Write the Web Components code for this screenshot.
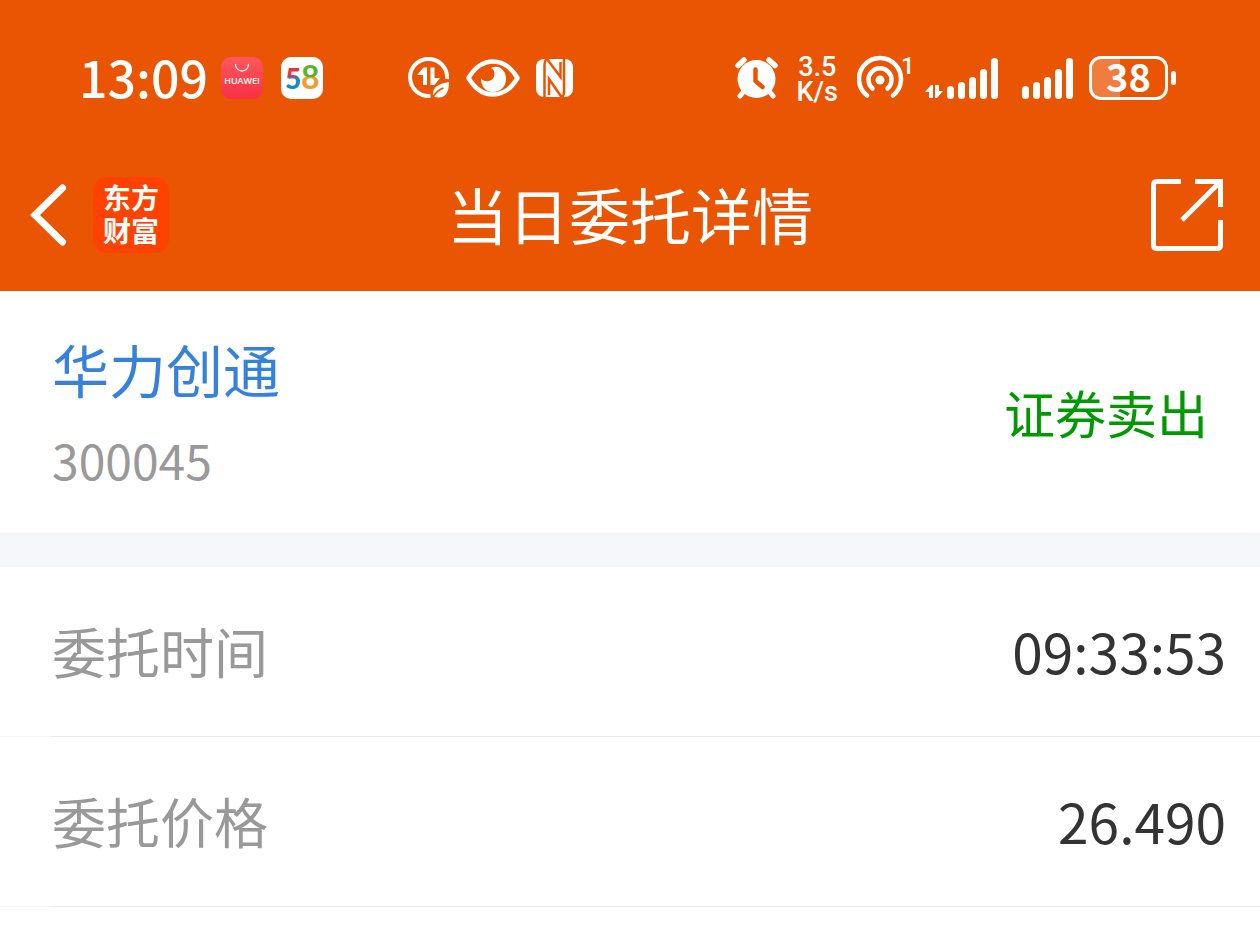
<!DOCTYPE html>
<html lang="zh-CN">
<head>
<meta charset="utf-8">
<meta name="viewport" content="width=device-width, initial-scale=1">
<title>当日委托详情</title>
<style>
  body {
    margin: 0;
    background-color: #fff;
    font-family: "Noto Sans CJK SC", "Noto Sans", sans-serif;
  }
</style>
</head>
<body>
<order-page>
  <status-bar slot="top" time="13:09" battery="38"></status-bar>
  <nav-bar slot="top">当日委托详情</nav-bar>
  <stock-card>
    <span slot="name">华力创通</span>
    <span slot="code">300045</span>
    <span slot="side">证券卖出</span>
  </stock-card>
  <detail-row label="委托时间">09:33:53</detail-row>
  <detail-row label="委托价格">26.490</detail-row>
</order-page>

<script>
const define = (name, getTemplate) => {
  customElements.define(name, class extends HTMLElement {
    constructor() {
      super();
      this._shadowRoot = this.attachShadow({ mode: "open" });
    }

    connectedCallback() {
      const template = document.createElement("template");
      template.innerHTML = getTemplate(this);
      this._shadowRoot.replaceChildren(template.content.cloneNode(true));
    }
  });
};

define("order-page", () => `
  <style>
    :host {
      display: block;
    }
    header {
      background-color: #ea5504;
      color: #fff;
    }
  </style>
  <header><slot name="top"></slot></header>
  <main><slot></slot></main>
`);

define("app-badge", (el) => `
  <style>
    :host {
      display: block;
    }
    svg {
      display: block;
    }
    .huawei {
      font: 600 9px "Open Sans", sans-serif;
    }
    .five {
      font: 900 28px Lato, sans-serif;
    }
    .eight {
      font: 700 32px Lato, sans-serif;
    }
  </style>
  ${el.getAttribute("app") === "huawei" ? `
  <svg width="42" height="42" viewBox="0 0 42 42" role="img" aria-label="HUAWEI">
    <defs>
      <linearGradient id="red" x2="0" y2="1">
        <stop offset="0" stop-color="#ff575c"/>
        <stop offset="1" stop-color="#f93043"/>
      </linearGradient>
    </defs>
    <rect width="42" height="42" rx="10" fill="url(#red)"/>
    <path d="M14.500 7.500a6.500 6.500 0 0 0 13 0" fill="none" stroke="#fff" stroke-width="1.300" stroke-linecap="round"/>
    <text class="huawei" x="21" y="27" fill="#fff" text-anchor="middle">HUAWEI</text>
  </svg>` : `
  <svg width="42" height="42" viewBox="0 0 42 42" role="img" aria-label="58">
    <defs>
      <linearGradient id="five" x2="0" y2="1">
        <stop offset=".47" stop-color="#e5323e"/>
        <stop offset=".47" stop-color="#1687c9"/>
      </linearGradient>
      <linearGradient id="eight" x2="0" y2="1">
        <stop offset=".52" stop-color="#54b52b"/>
        <stop offset=".52" stop-color="#f29a2e"/>
      </linearGradient>
    </defs>
    <rect width="42" height="42" rx="10" fill="#fff"/>
    <text class="five" x="4" y="32" fill="url(#five)">5</text>
    <text class="eight" x="20" y="32" fill="url(#eight)">8</text>
  </svg>`}
`);

define("signal-bars", () => `
  <style>
    :host {
      display: block;
    }
    svg {
      display: block;
    }
  </style>
  <svg width="51" height="42" viewBox="0 -1 51 42" fill="#fff" aria-hidden="true">
    <rect y="28" width="7" height="13" rx="3.500"/>
    <rect x="11" y="24" width="7" height="17" rx="3.500"/>
    <rect x="22" y="19" width="7" height="22" rx="3.500"/>
    <rect x="33" y="11" width="7" height="30" rx="3.500"/>
    <rect x="44" y="0" width="7" height="41" rx="3.500"/>
  </svg>
`);

define("battery-level", (el) => `
  <style>
    :host {
      display: flex;
      align-items: center;
      gap: 3px;
    }
    .cell {
      box-sizing: border-box;
      width: 79px;
      height: 44px;
      border: 3px solid #fff;
      border-radius: 12px;
      background: linear-gradient(to right, #f07c3e ${el.getAttribute("value")}%, transparent 0) no-repeat;
      font-size: 38px;
      font-weight: 700;
      line-height: 34px;
      text-align: center;
    }
    .tip {
      width: 5px;
      height: 14px;
      border-radius: 3px;
      background-color: #fff;
    }
  </style>
  <div class="cell">${el.getAttribute("value")}</div>
  <div class="tip"></div>
`);

define("status-bar", (el) => `
  <style>
    :host {
      display: flex;
      align-items: center;
      height: 122px;
      padding: 17px 84px 0 79px;
    }
    svg {
      display: block;
    }
    .group {
      display: flex;
      align-items: center;
      gap: 16px;
    }
    .left {
      gap: 13px;
    }
    .left app-badge + app-badge {
      margin-left: 5px;
    }
    .time {
      padding-bottom: 4px;
      font-size: 50px;
      font-weight: 500;
      line-height: 50px;
    }
    .middle {
      margin-left: 85px;
    }
    .right {
      margin-left: auto;
    }
    .speed {
      padding: 4px 3px 0;
      font: 500 27px/25px Roboto, sans-serif;
      text-align: center;
    }
    .network {
      display: flex;
      align-items: flex-end;
      gap: 4px;
      margin-left: -8px;
    }
    .second {
      margin-left: 8px;
    }
    .count {
      font: 500 24px Roboto, sans-serif;
    }
  </style>
  <div class="group left">
    <span class="time">${el.getAttribute("time")}</span>
    <app-badge app="huawei"></app-badge>
    <app-badge app="58"></app-badge>
  </div>
  <div class="group middle">
    <svg width="42" height="42" viewBox="0 0 42 42" fill="none" aria-hidden="true">
      <path d="M22.500 38.800A18.500 18.500 0 1 1 39 22" stroke="#fff" stroke-width="4"/>
      <path d="M9 18L15.500 10.500H19V28H15V18ZM22.500 10.500H26.500V21H32L26.500 28H22.500Z" fill="#fff"/>
      <path d="M41 25C30 27 24 30 25 39.500C36 43 41 37 41 25Z" fill="#fff"/>
      <path d="M24 41.500C27 36 31 32.500 35.500 31" stroke="#ea5504" stroke-width="1.800"/>
    </svg>
    <svg width="54" height="38" viewBox="0 0 54 38" aria-hidden="true">
      <path d="M2.500 19C9 8 18 2.500 27 2.500S45 8 51.500 19C45 30 36 35.500 27 35.500S9 30 2.500 19Z" fill="none" stroke="#fff" stroke-width="4.500" stroke-linejoin="round"/>
      <path d="M25 9C34 5 40 12 40 20C40 28 34 33 27 33C19 33 15 27 15 19.500C18 23 24 23 27 19.500C29.500 16 29 11 25 9Z" fill="#fff"/>
    </svg>
    <svg width="38" height="38" viewBox="0 0 38 38" aria-hidden="true">
      <rect width="37" height="38" rx="8" fill="#fff"/>
      <path d="M8.500 38V6Q8.500 1 11 0L24.500 18V3M28 0V33Q28 37 25.500 38L13 20V36" fill="none" stroke="#ea5504" stroke-width="2.500"/>
    </svg>
  </div>
  <div class="group right">
    <svg width="43" height="42" viewBox="0 0 43 42" fill="none" stroke="#fff" stroke-linecap="round" aria-hidden="true">
      <circle cx="21.500" cy="22" r="19" fill="#fff" stroke="none"/>
      <path d="M9 34L5 39M34 34L38 39" stroke-width="5"/>
      <path d="M3 8.500L9 3M34 3L40 8.500" stroke-width="5.500"/>
      <path d="M20.500 12.500V24L27.500 30" stroke="#ea5504" stroke-width="4.500" stroke-linejoin="round"/>
    </svg>
    <div class="speed">3.5<br>K/s</div>
    <svg width="60" height="56" viewBox="0 -6 60 56" fill="none" stroke="#fff" stroke-width="4.500" stroke-linecap="round" aria-hidden="true">
      <path d="M10 39.500A21 21 0 1 1 36 39.500"/>
      <path d="M15.500 32.500A11.500 11.500 0 1 1 30.500 32.500"/>
      <circle cx="23" cy="24" r="4.500" fill="#fff" stroke="none"/>
      <text class="count" x="44" y="18" fill="#fff" stroke="none">1</text>
    </svg>
    <div class="network">
      <svg width="18" height="15" viewBox="0 0 18 15" fill="#fff" aria-hidden="true">
        <path d="M0 8L6 1H8V14H4V8ZM10 1H14V7H18L12 14H10Z"/>
      </svg>
      <signal-bars></signal-bars>
    </div>
    <signal-bars class="second"></signal-bars>
    <battery-level value="${el.getAttribute("battery")}"></battery-level>
  </div>
`);

define("nav-bar", () => `
  <style>
    :host {
      display: grid;
      grid-template-columns: 1fr auto 1fr;
      align-items: center;
      height: 152px;
      font-family: "Liberation Sans", "Noto Sans CJK SC", sans-serif;
    }
    button {
      display: block;
      padding: 0;
      border: none;
      background: none;
      color: inherit;
      font: inherit;
      cursor: pointer;
    }
    svg {
      display: block;
    }
    .left {
      display: flex;
      align-items: center;
      gap: 26px;
      padding-left: 29px;
    }
    .logo {
      width: 76px;
      padding: 6px 0 4px;
      border-radius: 14px;
      background-color: #ff4200;
      font-size: 28px;
      font-weight: 700;
      line-height: 33px;
      text-align: center;
    }
    h1 {
      margin: 0;
      padding-top: 8px;
      font-size: 61px;
      font-weight: 400;
      line-height: 80px;
    }
    .share {
      justify-self: end;
      margin-right: 36px;
    }
  </style>
  <div class="left">
    <button type="button" aria-label="返回">
      <svg width="38" height="64" viewBox="0 0 38 64" fill="none" stroke="#fff" stroke-width="7">
        <path d="M33.500 5L6 32L33.500 59" stroke-linecap="round"/>
      </svg>
    </button>
    <div class="logo">东方<br>财富</div>
  </div>
  <h1><slot></slot></h1>
  <button class="share" type="button" aria-label="分享">
    <svg width="73" height="72" viewBox="0 0 73 72" fill="none" stroke="#fff" stroke-width="5">
      <path d="M30 2.500H6Q2.500 2.500 2.500 6V66Q2.500 69.500 6 69.500H66Q69.500 69.500 69.500 66V41"/>
      <path d="M44 2.500H69.500V28M69 3L31 41"/>
    </svg>
  </button>
`);

define("stock-card", () => `
  <style>
    :host {
      display: flex;
      justify-content: space-between;
      align-items: center;
      padding: 0 52px;
      border-bottom: 34px solid #f6f7f9;
    }
    .stock {
      padding: 32px 0 28px;
    }
    .name {
      color: #3581dc;
      font-size: 57px;
      line-height: 90px;
    }
    .code {
      color: #999;
      font-size: 48px;
      line-height: 92px;
    }
    .side {
      color: #090;
      font-size: 51px;
    }
  </style>
  <div class="stock">
    <div class="name"><slot name="name"></slot></div>
    <div class="code"><slot name="code"></slot></div>
  </div>
  <div class="side"><slot name="side"></slot></div>
`);

define("detail-row", (el) => `
  <style>
    :host {
      display: block;
      border-bottom: 1px solid;
      border-image: linear-gradient(to right, #f7f7f7 52px, #e8e8e8 52px) 1;
    }
    dl {
      display: flex;
      justify-content: space-between;
      margin: 0;
      padding: 0 34px 2px 52px;
      font-size: 54px;
      line-height: 167px;
    }
    dt {
      color: #999;
    }
    dd {
      margin: 0;
      color: #333;
      font-size: 55px;
    }
  </style>
  <dl>
    <dt>${el.getAttribute("label")}</dt>
    <dd><slot></slot></dd>
  </dl>
`);
</script>
</body>
</html>
